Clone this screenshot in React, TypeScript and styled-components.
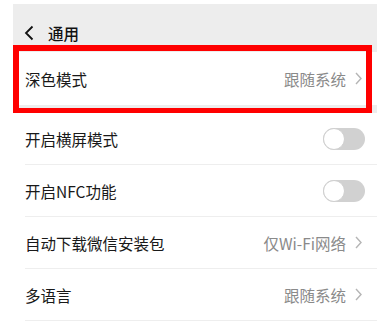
import { FC } from 'react'
import styled, { createGlobalStyle } from 'styled-components'

const GlobalStyle = createGlobalStyle`
  body {
    margin: 0;
    background: #ffffff;
    font-family: "Noto Sans CJK SC", "Noto Sans", sans-serif;
  }
`

const Page = styled.div`
  padding: 4px 0 0 13px;
  width: 364px;
`

const Screen = styled.div`
  background-color: #ededed;
`

const Header = styled.div`
  height: 48px;
  display: flex;
  align-items: flex-start;
  padding-top: 18px;
  box-sizing: border-box;
  padding-left: 11px;
  gap: 14px;
  color: #111111;
  font-size: 15.5px;
  font-weight: 500;
  line-height: 22px;
`

const Section = styled.div<{ $gap?: boolean }>`
  position: relative;
  background: #ffffff;
  margin-bottom: ${(p) => (p.$gap ? '8px' : '0')};
`

const Highlight = styled.div`
  position: absolute;
  top: -7px;
  left: 0;
  right: 5px;
  bottom: -9px;
  border: 6.5px solid #ff0000;
  pointer-events: none;
`

const Row = styled.div<{ $height: number; $divider?: boolean }>`
  height: ${(p) => p.$height}px;
  margin-left: 12px;
  padding-right: 12px;
  display: flex;
  align-items: center;
  justify-content: space-between;
  box-sizing: border-box;
  border-bottom: ${(p) => (p.$divider ? '1px solid #eeeeee' : 'none')};
`

const Title = styled.span`
  font-size: 15.5px;
  color: #191919;
`

const Value = styled.span`
  display: flex;
  align-items: center;
  gap: 9px;
  font-size: 15.5px;
  color: #8a8a8a;
  padding-right: 3px;
`

const Toggle = styled.div`
  width: 42px;
  height: 22px;
  border-radius: 11px;
  background: #d1d1d1;
  position: relative;

  &::after {
    content: '';
    position: absolute;
    left: 0;
    top: 0;
    width: 22px;
    height: 22px;
    box-sizing: border-box;
    border-radius: 50%;
    background: #ffffff;
    border: 1px solid #cfcfcf;
  }
`

const Chevron: FC = () => (
  <svg width="7" height="13" viewBox="0 0 7 13">
    <polyline points="1,1 6,6.5 1,12" fill="none" stroke="#b5b5b5" strokeWidth="1.4" />
  </svg>
)

const Back: FC = () => (
  <svg width="10" height="16" viewBox="0 0 10 16" style={{ marginTop: 3 }}>
    <polyline points="8.5,1.5 2,8 8.5,14.5" fill="none" stroke="#111" strokeWidth="1.8" />
  </svg>
)

const App: FC = () => {
  return (
    <Page>
      <GlobalStyle />
      <Screen>
        <Header>
          <Back />
          <span>通用</span>
        </Header>
        <Section $gap>
          <Row $height={53}>
            <Title>深色模式</Title>
            <Value>
              跟随系统
              <Chevron />
            </Value>
          </Row>
          <Highlight />
        </Section>
        <Section>
          <Row $height={52} $divider>
            <Title>开启横屏模式</Title>
            <Toggle />
          </Row>
          <Row $height={52} $divider>
            <Title>开启NFC功能</Title>
            <Toggle />
          </Row>
          <Row $height={52} $divider>
            <Title>自动下载微信安装包</Title>
            <Value>
              仅Wi-Fi网络
              <Chevron />
            </Value>
          </Row>
          <Row $height={52} $divider>
            <Title>多语言</Title>
            <Value>
              跟随系统
              <Chevron />
            </Value>
          </Row>
          <Row $height={20} />
        </Section>
      </Screen>
    </Page>
  )
}

export default App
